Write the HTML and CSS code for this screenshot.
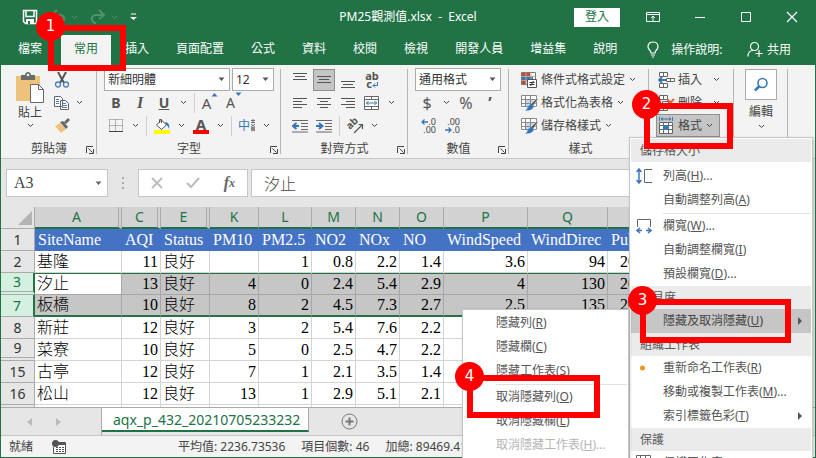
FILE: index.html
```html
<!DOCTYPE html>
<html lang="zh-Hant">

<head>
    <meta charset="UTF-8">
    <meta name="viewport" content="width=device-width, initial-scale=1.0">
    <title>PM25觀測值.xlsx - Excel</title>
    <link rel="stylesheet" href="styles.css">
</head>

<body>

    <!-- shared small glyphs -->
    <svg class="sprite" aria-hidden="true">
        <symbol id="chev" viewBox="0 0 7 5"><path d="M1 1l2.5 2.5L6 1" fill="none" stroke="currentColor"/></symbol>
        <symbol id="tri" viewBox="0 0 7 5"><path d="M0.5 0.5h6L3.5 4z" fill="currentColor"/></symbol>
        <symbol id="launch" viewBox="0 0 9 9"><path d="M1.5 8V1.5H8M3.5 3.5l4 4M8.5 4v4.5H4" fill="none" stroke="currentColor"/></symbol>
        <symbol id="brushgrid" viewBox="0 0 17 16">
            <path d="M1 1h15v12H1z" fill="#fff"/><path d="M5 5h8v8H5z" fill="#c7d7ea"/>
            <path d="M.5 .5h15v11h-15zM.5 4.5h15M.5 8.5h15M4.500 .5v11M9.500 .5v11" fill="none" stroke="#888"/>
            <path d="M16 3l1 1-5 7-2-2z" fill="#555" stroke="#f3f3f3" stroke-width=".6"/><path d="M10 9c2 0 3 2 2 4-2 3-5 2-8 3 3-2 3-6 6-7z" fill="#3877b7"/>
        </symbol>
    </svg>

    <div class="window">

        <header class="titlebar">
            <div class="quick">
                <button type="button" aria-label="儲存"><svg width="16" height="16" viewBox="0 0 16 16"><path d="M1.500 1.500h13v13h-11l-2-2zM4 1.500v6h8v-6" fill="none" stroke="#fff" stroke-width="1.500"/><path d="M4 10h8v5H4z" fill="#fff"/><path d="M6 12h2v3H6z" fill="#217346"/></svg></button>
                <button type="button" class="dim" aria-label="復原"><svg width="16" height="16" viewBox="0 0 16 16"><path d="M7 1L2 6l5 4M2 6h8c6 0 5 8 0 8" fill="none" stroke="currentColor" stroke-width="2"/></svg><svg class="chev"><use href="#chev"/></svg></button>
                <button type="button" class="dim" aria-label="重做"><svg width="16" height="16" viewBox="0 0 16 16"><path d="M9 1l5 5-5 4M14 6H6c-6 0-5 8 0 8" fill="none" stroke="currentColor" stroke-width="2"/></svg><svg class="chev"><use href="#chev"/></svg></button>
                <button type="button" aria-label="自訂快速存取工具列"><svg width="7" height="8" viewBox="0 0 7 8"><path d="M1 1h5" stroke="#fff"/><path d="M0 4h7L3.500 7z" fill="#fff"/></svg></button>
            </div>
            <h1>PM25觀測值.xlsx&nbsp; -&nbsp; Excel</h1>
            <div class="system">
                <button type="button" class="signin">登入</button>
                <button type="button" aria-label="功能區顯示選項"><svg width="14" height="12" viewBox="0 0 14 12"><path d="M.5 1.500h13v9H.5zM.5 3.500h13M7 10V5M5 7l2-2 2 2" fill="none" stroke="#fff"/></svg></button>
                <button type="button" aria-label="最小化"><svg width="12" height="12" viewBox="0 0 12 12"><path d="M1 6.500h10" stroke="#fff"/></svg></button>
                <button type="button" aria-label="最大化"><svg width="12" height="12" viewBox="0 0 12 12"><path d="M1.500 1.500h9v9h-9z" fill="none" stroke="#fff"/></svg></button>
                <button type="button" aria-label="關閉"><svg width="12" height="12" viewBox="0 0 12 12"><path d="M1 1l10 10M11 1L1 11" stroke="#fff" stroke-width="1.200"/></svg></button>
            </div>
        </header>

        <nav class="tabs">
            <a href="#" class="file">檔案</a>
            <a href="#" class="active">常用</a>
            <a href="#">插入</a>
            <a href="#">頁面配置</a>
            <a href="#">公式</a>
            <a href="#">資料</a>
            <a href="#">校閱</a>
            <a href="#">檢視</a>
            <a href="#">開發人員</a>
            <a href="#">增益集</a>
            <a href="#">說明</a>
            <div class="tabs-right">
                <button type="button"><svg width="12" height="17" viewBox="0 0 12 17"><path d="M4 12c0-3-3-3-3-6.500C1 3 3 1 6 1s5 2 5 4.500C11 9 8 9 8 12zM4 14h4M5 16h2" fill="none" stroke="#fff" stroke-width="1.200"/></svg><span class="tell">操作說明:</span></button>
                <button type="button"><svg width="16" height="17" viewBox="0 0 16 17"><circle cx="7.500" cy="5.500" r="4" fill="none" stroke="#fff" stroke-width="1.200"/><path d="M1 15.500c0-4 2-6 5-6M12 9v7M8.500 12.500h7" fill="none" stroke="#fff" stroke-width="1.200"/></svg><span>共用</span></button>
            </div>
        </nav>

        <div class="ribbon">

            <section class="group clipboard">
                <div class="side">
                    <button type="button" class="big">
                        <svg width="28" height="31" viewBox="0 0 28 31"><path d="M0 4h24v25H0z" fill="#eec27c"/><path d="M5 3h4c0-4 6-4 6 0h4v5H5z" fill="#6a6a6a"/><circle cx="12" cy="3" r="1.300" fill="#f3f3f3"/><path d="M14.500 12.500h8l5 5v13h-13z" fill="#fff" stroke="#666"/><path d="M22.500 12.500v5h5" fill="none" stroke="#666"/></svg>
                        <span>貼上</span>
                        <svg class="chev"><use href="#chev"/></svg>
                    </button>
                    <div class="rows">
                        <div class="row"><button type="button" class="ic" aria-label="剪下"><svg width="16" height="16" viewBox="0 0 16 16"><path d="M4 0l6 11M12 0L6 11" stroke="#555" stroke-width="2"/><circle cx="4" cy="12.500" r="2.500" fill="none" stroke="#4a7ebb" stroke-width="1.300"/><circle cx="12" cy="12.500" r="2.500" fill="none" stroke="#4a7ebb" stroke-width="1.300"/></svg></button></div>
                        <div class="row"><button type="button" class="ic" aria-label="複製"><svg width="16" height="16" viewBox="0 0 16 16"><path d="M.5 1.500h6l2 2v8h-8zM6.500 5.500h5l3 3v6h-8z" fill="#fff" stroke="#666"/><path d="M2 4.500h3M2 6.500h3M2 8.500h3M8 8.500h4M8 10.500h5M8 12.500h5" stroke="#4a7ebb"/></svg></button><svg class="chev"><use href="#chev"/></svg></div>
                        <div class="row"><button type="button" class="ic" aria-label="複製格式"><svg width="16" height="16" viewBox="0 0 16 16"><path d="M1 8l5-3 6 6-5 4z" fill="#eec27c"/><path d="M6 4l3-1 5 6-2 2zM10 4l4-4 2 2-4 4z" fill="#666"/></svg></button></div>
                    </div>
                </div>
                <h2>剪貼簿<button type="button" class="launch" aria-label="剪貼簿設定"><svg><use href="#launch"/></svg></button></h2>
            </section>

            <section class="group font">
                <div class="row">
                    <label class="combo fontname"><select aria-label="字型"><option>新細明體</option></select><svg class="chev"><use href="#tri"/></svg></label>
                    <label class="combo fontsize"><select aria-label="字型大小"><option>12</option></select><svg class="chev"><use href="#tri"/></svg></label>
                </div>
                <div class="row">
                    <button type="button" class="btn letter"><b>B</b></button>
                    <button type="button" class="btn letter"><i>I</i></button>
                    <button type="button" class="btn letter"><u>U</u></button>
                    <svg class="chev"><use href="#chev"/></svg>
                    <span class="bar"></span>
                    <button type="button" class="btn grow">A<svg class="chev up"><use href="#tri"/></svg></button>
                    <button type="button" class="btn shrink">A<svg class="chev"><use href="#tri"/></svg></button>
                </div>
                <div class="row">
                    <button type="button" class="btn" aria-label="框線"><svg width="14" height="14" viewBox="0 0 14 14"><path d="M.5 .5h13M.5 6.500h13M.5 .5v12M6.500 .5v12M13.500 .5v12" stroke="#777" stroke-dasharray="1 1" fill="none"/><path d="M0 12.500h14" stroke="#444"/></svg></button>
                    <svg class="chev"><use href="#chev"/></svg>
                    <span class="bar"></span>
                    <button type="button" class="btn" aria-label="填滿色彩"><svg width="16" height="16" viewBox="0 0 16 16"><path d="M2.500 7l5-5 5 5-5 4.500z" fill="#fff" stroke="#555"/><path d="M5.500 5V1.500h2V5" fill="none" stroke="#555"/><path d="M11 4c4 0 5 4 4 7-1-3-1-3-3-4z" fill="#3877b7"/><path d="M0 12h16v4H0z" fill="#ff0"/></svg></button>
                    <svg class="chev"><use href="#chev"/></svg>
                    <button type="button" class="btn" aria-label="字型色彩"><span class="fontcolor">A</span></button>
                    <svg class="chev"><use href="#chev"/></svg>
                    <span class="bar"></span>
                    <button type="button" class="btn phonetic">中<svg width="6" height="13" viewBox="0 0 6 13"><path d="M1 1.500h4M1 3.500h4M3 0v4M1 5l4 3-4 2 4 2M5 5L1 8l4 2-4 2" fill="none" stroke="#555" stroke-width=".8"/></svg></button>
                    <svg class="chev"><use href="#chev"/></svg>
                </div>
                <h2>字型<button type="button" class="launch" aria-label="字型設定"><svg><use href="#launch"/></svg></button></h2>
            </section>

            <section class="group align">
                <div class="row">
                    <button type="button" class="btn" aria-label="靠上對齊"><svg width="14" height="16" viewBox="0 0 14 16"><path d="M0 1.500h14M2 4.500h10M0 7.500h14" stroke="#555"/></svg></button>
                    <button type="button" class="btn on" aria-label="置中對齊"><svg width="14" height="16" viewBox="0 0 14 16"><path d="M0 4.500h14M2 7.500h10M0 10.500h14" stroke="#555"/></svg></button>
                    <button type="button" class="btn" aria-label="靠下對齊"><svg width="14" height="16" viewBox="0 0 14 16"><path d="M0 9.500h14M2 12.500h10M0 15.500h14" stroke="#555"/></svg></button>
                    <button type="button" class="btn wrap"><span>ab</span><span>c<svg width="6" height="6" viewBox="0 0 6 6"><path d="M5.500 0v3.500H1M3 1.500l-2 2 2 2" fill="none" stroke="#3877b7"/></svg></span></button>
                </div>
                <div class="row">
                    <button type="button" class="btn" aria-label="靠左對齊"><svg width="14" height="12" viewBox="0 0 14 12"><path d="M0 1.500h14M0 4.500h9M0 7.500h14M0 10.500h9" stroke="#555"/></svg></button>
                    <button type="button" class="btn" aria-label="置中"><svg width="14" height="12" viewBox="0 0 14 12"><path d="M0 1.500h14M3 4.500h8M0 7.500h14M3 10.500h8" stroke="#555"/></svg></button>
                    <button type="button" class="btn" aria-label="靠右對齊"><svg width="14" height="12" viewBox="0 0 14 12"><path d="M0 1.500h14M5 4.500h9M0 7.500h14M5 10.500h9" stroke="#555"/></svg></button>
                    <button type="button" class="btn" aria-label="跨欄置中"><svg width="16" height="16" viewBox="0 0 16 16"><path d="M.5 1.500h14v13H.5zM.5 4.500h14M.5 11.500h14M7.500 1.500v3M7.500 11.500v3" fill="#fff" stroke="#666"/><path d="M2 8h11M4.500 6l-2 2 2 2M10.500 6l2 2-2 2" fill="none" stroke="#3877b7"/></svg></button>
                    <svg class="chev"><use href="#chev"/></svg>
                </div>
                <div class="row">
                    <button type="button" class="btn" aria-label="減少縮排"><svg width="16" height="14" viewBox="0 0 16 14"><path d="M0 1.500h16M9 4.500h7M9 7.500h7M9 10.500h7M0 13h16" stroke="#666"/><path d="M7 7H2M4.500 4L1 7l3.500 3" fill="none" stroke="#3877b7" stroke-width="2"/></svg></button>
                    <button type="button" class="btn" aria-label="增加縮排"><svg width="16" height="14" viewBox="0 0 16 14"><path d="M0 1.500h16M9 4.500h7M9 7.500h7M9 10.500h7M0 13h16" stroke="#666"/><path d="M0 7h5M3 4l3.500 3L3 10" fill="none" stroke="#3877b7" stroke-width="2"/></svg></button>
                    <span class="bar"></span>
                    <button type="button" class="btn" aria-label="方向"><svg width="18" height="18" viewBox="0 0 18 18"><text x="4" y="13" transform="rotate(-45 4 13)" class="abtext">ab</text><path d="M8 16l8-8M12.500 7.500h4V12" fill="none" stroke="#555" stroke-width="1.200"/></svg></button>
                    <svg class="chev"><use href="#chev"/></svg>
                </div>
                <h2>對齊方式<button type="button" class="launch" aria-label="對齊設定"><svg><use href="#launch"/></svg></button></h2>
            </section>

            <section class="group number">
                <div class="row">
                    <label class="combo numfmt"><select aria-label="數值格式"><option>通用格式</option></select><svg class="chev"><use href="#tri"/></svg></label>
                </div>
                <div class="row">
                    <button type="button" class="btn sign">$</button>
                    <svg class="chev"><use href="#chev"/></svg>
                    <button type="button" class="btn sign">%</button>
                    <button type="button" class="btn sign comma">’</button>
                </div>
                <div class="row">
                    <button type="button" class="btn dec"><span><svg width="7" height="6" viewBox="0 0 7 6"><path d="M7 3H1M3.500 .5L1 3l2.500 2.500" fill="none" stroke="#3877b7" stroke-width="1.300"/></svg>.0</span><span>.00</span></button>
                    <button type="button" class="btn dec"><span>.00</span><span><svg width="7" height="6" viewBox="0 0 7 6"><path d="M0 3h6M3.500 .5L6 3 3.500 5.500" fill="none" stroke="#3877b7" stroke-width="1.300"/></svg>.0</span></button>
                </div>
                <h2>數值<button type="button" class="launch" aria-label="數值設定"><svg><use href="#launch"/></svg></button></h2>
            </section>

            <section class="group styles">
                <div class="row"><button type="button" class="cmd"><svg width="17" height="16" viewBox="0 0 17 16"><path d="M.5 .5h14v12H.5z" fill="#fff" stroke="#777"/><path d="M1 1h8v3H1zM1 9h4v3H1z" fill="#d24726"/><path d="M1 5h11v3H1z" fill="#3877b7"/><path d="M.5 4.500h14M.5 8.500h14M5 .5v12M10 .5v12" stroke="#aaa"/><path d="M6.500 7.500h9v8h-9z" fill="#fff" stroke="#555"/><path d="M8.500 10.500h5M8.500 12.500h5M12.500 9l-3 5" stroke="#333"/></svg>條件式格式設定<svg class="chev"><use href="#chev"/></svg></button></div>
                <div class="row"><button type="button" class="cmd"><svg width="17" height="16"><use href="#brushgrid"/></svg>格式化為表格<svg class="chev"><use href="#chev"/></svg></button></div>
                <div class="row"><button type="button" class="cmd"><svg width="17" height="16"><use href="#brushgrid"/></svg>儲存格樣式<svg class="chev"><use href="#chev"/></svg></button></div>
                <h2>樣式</h2>
            </section>

            <section class="group cells">
                <div class="row"><button type="button" class="cmd wide"><svg width="17" height="16" viewBox="0 0 17 16"><path d="M1.500 .5h8v4h-8zM5.500 .5v4M1.500 11.500h8v4h-8zM5.500 11.500v4M8.500 6.500h8v3h-8zM12.500 6.500v3" fill="#fff" stroke="#666"/><path d="M8 8H2M4 5L1 8l3 3" fill="none" stroke="#3877b7" stroke-width="1.800"/></svg>插入<svg class="chev"><use href="#chev"/></svg></button></div>
                <div class="row"><button type="button" class="cmd wide"><svg width="17" height="16" viewBox="0 0 17 16"><path d="M1.500 .5h8v4h-8zM5.500 .5v4M4.500 6.500h6v3h-6zM1.500 11.500h8v4h-8zM5.500 11.500v4" fill="#fff" stroke="#666"/><path d="M9 4l7 7M16 4l-7 7" stroke="#d8643f" stroke-width="2"/></svg>刪除<svg class="chev"><use href="#chev"/></svg></button></div>
                <div class="row"><button type="button" class="cmd on"><svg width="17" height="17" viewBox="0 0 17 17"><path d="M1.500 0v4M14.500 0v4M3 2h10M5 .5L3 2l2 1.500M11 .5L13 2l-2 1.500" fill="none" stroke="#3877b7"/><path d="M1.500 5.500h13v11h-13zM1.500 8.500h13M1.500 12.500h13M5.500 5.500v11M10.500 5.500v11" fill="#fff" stroke="#666"/><path d="M5 8h6v5H5z" fill="#3877b7"/></svg>格式<svg class="chev"><use href="#chev"/></svg></button></div>
            </section>

            <section class="group edit">
                <button type="button" class="big">
                    <span class="find"><svg width="16" height="16" viewBox="0 0 16 16"><circle cx="9.500" cy="6" r="4.500" fill="none" stroke="#3877b7" stroke-width="1.600"/><path d="M6.500 9L2 13.500" stroke="#3877b7" stroke-width="2.500"/></svg></span>
                    <span>編輯</span>
                    <svg class="chev"><use href="#chev"/></svg>
                </button>
            </section>
        </div>

        <div class="formulabar">
            <label class="namebox"><input type="text" value="A3" aria-label="名稱方塊"><svg class="chev"><use href="#tri"/></svg></label>
            <span class="grip"></span>
            <div class="fx">
                <button type="button" aria-label="取消"><svg width="12" height="12" viewBox="0 0 12 12"><path d="M1 1l10 10M11 1L1 11" stroke="#bbb" stroke-width="1.800"/></svg></button>
                <button type="button" aria-label="輸入"><svg width="14" height="12" viewBox="0 0 14 12"><path d="M1 6l4 4 8-9" fill="none" stroke="#bbb" stroke-width="2"/></svg></button>
                <button type="button" class="fxbtn"><i>f</i><sub>x</sub></button>
            </div>
            <input type="text" class="formula" value="汐止" aria-label="資料編輯列">
        </div>

        <div class="sheet">
            <table>
                <colgroup>
                    <col class="c-head"><col class="c-a"><col class="c-c"><col class="c-e"><col class="c-e"><col class="c-l"><col class="c-n"><col class="c-n"><col class="c-n"><col class="c-p"><col class="c-q"><col>
                </colgroup>
                <thead>
                    <tr><th class="corner"><svg width="14" height="14" viewBox="0 0 14 14"><path d="M14 0v14H0z" fill="#b4b4b4"/></svg></th><th class="gap">A</th><th class="gap">C</th><th class="gap">E</th><th>K</th><th>L</th><th>M</th><th>N</th><th>O</th><th>P</th><th>Q</th><th>R</th></tr>
                </thead>
                <tbody>
                    <tr class="titles"><th>1</th><td>SiteName</td><td>AQI</td><td>Status</td><td>PM10</td><td>PM2.5</td><td>NO2</td><td>NOx</td><td>NO</td><td>WindSpeed</td><td>WindDirec</td><td>PublishTime</td></tr>
                    <tr><th>2</th><td class="t">基隆</td><td>11</td><td class="t">良好</td><td></td><td>1</td><td>0.8</td><td>2.2</td><td>1.4</td><td>3.6</td><td>94</td><td class="date">2021/7/5</td></tr>
                    <tr class="sel first"><th class="gap">3</th><td class="t cur">汐止</td><td>13</td><td class="t">良好</td><td>4</td><td>0</td><td>2.4</td><td>5.4</td><td>2.9</td><td>4</td><td>130</td><td class="date">2021/7/5</td></tr>
                    <tr class="sel last"><th>7</th><td class="t">板橋</td><td>10</td><td class="t">良好</td><td>8</td><td>2</td><td>4.5</td><td>7.3</td><td>2.7</td><td>2.5</td><td>135</td><td class="date">2021/7/5</td></tr>
                    <tr><th>8</th><td class="t">新莊</td><td>12</td><td class="t">良好</td><td>3</td><td>2</td><td>5.4</td><td>7.6</td><td>2.2</td><td></td><td></td><td></td></tr>
                    <tr><th class="gap">9</th><td class="t">菜寮</td><td>10</td><td class="t">良好</td><td>5</td><td>0</td><td>2.5</td><td>4.7</td><td>2.2</td><td></td><td></td><td></td></tr>
                    <tr><th>15</th><td class="t">古亭</td><td>12</td><td class="t">良好</td><td>7</td><td>1</td><td>2.1</td><td>3.5</td><td>1.4</td><td></td><td></td><td></td></tr>
                    <tr><th>16</th><td class="t">松山</td><td>12</td><td class="t">良好</td><td>13</td><td>1</td><td>2.9</td><td>5.1</td><td>2.1</td><td></td><td></td><td></td></tr>
                    <tr><th></th><td></td><td></td><td></td><td></td><td></td><td></td><td></td><td></td><td></td><td></td><td></td></tr>
                </tbody>
            </table>
        </div>

        <div class="sheettabs">
            <div class="nav">
                <button type="button" aria-label="上一張"><svg width="5" height="8" viewBox="0 0 5 8"><path d="M5 0v8L0 4z" fill="#bbb"/></svg></button>
                <button type="button" aria-label="下一張"><svg width="5" height="8" viewBox="0 0 5 8"><path d="M0 0v8l5-4z" fill="#bbb"/></svg></button>
            </div>
            <a href="#" class="sheettab">aqx_p_432_20210705233232</a>
            <button type="button" class="add" aria-label="新工作表"><svg width="17" height="17" viewBox="0 0 17 17"><circle cx="8.500" cy="8.500" r="7.500" fill="none" stroke="#777"/><path d="M8.500 4.500v8M4.500 8.500h8" stroke="#777" stroke-width="2"/></svg></button>
        </div>

        <footer class="status">
            <span class="ready">就緒</span>
            <svg width="14" height="14" viewBox="0 0 14 14"><path d="M6 2.500h7.500v11h-12V7" fill="#fff" stroke="#555"/><path d="M7 3h6v2H7z" fill="#555"/><circle cx="3.500" cy="3.500" r="3.500" fill="#555"/><path d="M4 7.500h2M7 7.500h2M10 7.500h2M4 9.500h2M7 9.500h2M10 9.500h2M4 11.500h2M7 11.500h2M10 11.500h2" stroke="#555"/></svg>
            <div class="stats">
                <span>平均值: 2236.73536</span>
                <span>項目個數: 46</span>
                <span>加總: 89469.41437</span>
            </div>
        </footer>
    </div>

    <!-- format menu -->
    <div class="menu format-menu">
        <h3>儲存格大小</h3>
        <ul class="spaced">
            <li><button type="button"><svg width="16" height="16" viewBox="0 0 16 16"><path d="M3 1v14M.5 4L3 1l2.500 3M.5 12L3 15l2.500-3" fill="none" stroke="#3877b7" stroke-width="1.500"/><path d="M16 1.500H8.500v13H16" fill="none" stroke="#666"/></svg><span>列高(<u>H</u>)...</span></button></li>
            <li><button type="button"><span>自動調整列高(<u>A</u>)</span></button></li>
            <li class="line"></li>
            <li><button type="button"><svg width="16" height="16" viewBox="0 0 16 16"><path d="M1.500 9V1.500h13V9" fill="none" stroke="#666"/><path d="M1 12.500h5M10 12.500h5M4 10l-3 2.500L4 15M12 10l3 2.500-3 2.500" fill="none" stroke="#3877b7" stroke-width="1.500"/></svg><span>欄寬(<u>W</u>)...</span></button></li>
            <li><button type="button"><span>自動調整欄寬(<u>I</u>)</span></button></li>
            <li><button type="button"><span>預設欄寬(<u>D</u>)...</span></button></li>
        </ul>
        <h3>可見度</h3>
        <ul>
            <li><button type="button" class="hover"><span>隱藏及取消隱藏(<u>U</u>)</span><svg class="more" width="5" height="8" viewBox="0 0 5 8"><path d="M0 0v8l4-4z" fill="#555"/></svg></button></li>
        </ul>
        <h3>組織工作表</h3>
        <ul>
            <li><button type="button"><svg width="16" height="16" viewBox="0 0 16 16"><circle cx="6.500" cy="8" r="2.500" fill="#f7941d"/></svg><span>重新命名工作表(<u>R</u>)</span></button></li>
            <li><button type="button"><span>移動或複製工作表(<u>M</u>)...</span></button></li>
            <li><button type="button"><span>索引標籤色彩(<u>T</u>)</span><svg class="more" width="5" height="8" viewBox="0 0 5 8"><path d="M0 0v8l4-4z" fill="#555"/></svg></button></li>
        </ul>
        <h3>保護</h3>
        <ul>
            <li><button type="button"><svg width="16" height="16" viewBox="0 0 16 16"><path d="M.5 .5h14v14H.5zM.5 4.500h14M.5 8.500h14M4.500 .5v14M9.500 .5v14" fill="none" stroke="#666"/></svg><span>保護工作表(<u>P</u>)...</span></button></li>
        </ul>
    </div>

    <!-- hide / unhide submenu -->
    <div class="menu hide-menu">
        <ul>
            <li><button type="button"><span>隱藏列(<u>R</u>)</span></button></li>
            <li><button type="button"><span>隱藏欄(<u>C</u>)</span></button></li>
            <li><button type="button"><span>隱藏工作表(<u>S</u>)</span></button></li>
            <li class="line"></li>
            <li><button type="button"><span>取消隱藏列(<u>O</u>)</span></button></li>
            <li><button type="button"><span>取消隱藏欄(<u>L</u>)</span></button></li>
            <li><button type="button" disabled><span>取消隱藏工作表(<u>H</u>)...</span></button></li>
        </ul>
    </div>

    <!-- numbered steps -->
    <div class="step step1"><span>1</span></div>
    <div class="step step2"><span>2</span></div>
    <div class="step step3"><span>3</span></div>
    <div class="step step4"><span>4</span></div>

</body>

</html>
```

FILE: styles.css
```css
* {
    box-sizing: border-box;
}

body {
    margin: 0;
    height: 100vh;
    position: relative;
    overflow: hidden;
    font-family: "Noto Sans", "Noto Sans CJK TC", sans-serif;
    font-size: 12px;
    line-height: 16px;
    color: #444;
}

button,
input,
select {
    font: inherit;
    color: inherit;
    background: none;
    border: none;
    padding: 0;
    margin: 0;
    outline: none;
}

button {
    display: flex;
    align-items: center;
    justify-content: center;
    white-space: nowrap;
}

a {
    color: inherit;
    text-decoration: none;
}

h1,
h2,
h3,
ul {
    margin: 0;
    padding: 0;
    font-size: 12px;
    font-weight: normal;
    list-style: none;
}

svg {
    flex: none;
}

.sprite {
    display: none;
}

.chev {
    width: 7px;
    height: 5px;
}

.window {
    height: 100vh;
    display: flex;
    flex-direction: column;
    background: #e6e6e6;
    border: 1px solid #217346;
    border-top: none;
}

/* title bar */
.titlebar {
    display: grid;
    grid-template-columns: 1fr auto 1fr;
    align-items: center;
    flex: none;
    height: 34px;
    background: #217346;
    color: #fff;
}

.quick {
    display: flex;
    align-items: center;
    padding-left: 21px;
    gap: 12px;
}

.quick button {
    gap: 5px;
}

.dim {
    color: #4f9170;
}

.system {
    display: flex;
    align-items: center;
    justify-content: flex-end;
    padding-right: 17px;
    gap: 34px;
}

.signin {
    background: #fff;
    color: #217346;
    width: 46px;
    height: 19px;
    margin-right: -8px;
}

/* ribbon tabs */
.tabs {
    display: flex;
    flex: none;
    height: 31px;
    background: #217346;
    color: #fff;
    gap: 1px;
}

.tabs a {
    padding: 7px 13px;
    white-space: nowrap;
}

.tabs .file {
    padding: 7px 18px 7px 17px;
}

.tabs .active {
    margin-top: 1px;
    padding: 6px 13px;
    background: #f3f3f3;
    color: #217346;
}

.tabs-right {
    display: flex;
    flex: 1;
    justify-content: space-between;
    padding: 0 24px 0 16px;
}

.tabs-right button {
    gap: 4px;
}

.tell {
    padding-left: 8px;
}

/* ribbon */
.ribbon {
    display: flex;
    flex: none;
    height: 94px;
    background: #f3f3f3;
    border-bottom: 1px solid #c8c8c8;
}

.group {
    display: flex;
    flex-direction: column;
    flex: none;
    position: relative;
    padding: 3px 7px 0;
}

/* divider line on the right of each group */
.group:after {
    content: "";
    position: absolute;
    right: 0;
    top: 4px;
    bottom: 4px;
    width: 1px;
    background: #b5b5b5;
}

.group h2 {
    display: flex;
    justify-content: center;
    position: relative;
    padding-top: 4px;
}

.launch {
    position: absolute;
    right: -4px;
    top: 8px;
}

.launch svg {
    width: 9px;
    height: 9px;
}

.clipboard { width: 96px; }
.font { width: 184px; }
.align { width: 127px; }
.number { width: 101px; }
.styles { width: 140px; padding-left: 10px; }
.cells { width: 85px; }
.edit { width: 54px; }

.row {
    display: flex;
    align-items: center;
    height: 23px;
}

.row > .chev {
    margin: 0 4px;
}

.side {
    display: flex;
}

.big {
    flex-direction: column;
    justify-content: flex-start;
    width: 44px;
    height: 69px;
    padding-top: 4px;
    gap: 2px;
}

.edit .big {
    width: 40px;
    padding-top: 1px;
    gap: 4px;
}

.find {
    display: flex;
    align-items: center;
    justify-content: center;
    width: 32px;
    height: 31px;
    background: #fff;
    border: 1px solid #ababab;
}

.ic {
    width: 20px;
}

.btn {
    width: 24px;
    height: 22px;
}

.btn.on {
    width: 22px;
    margin: 0 1px;
    background: #c5c5c5;
    border: 1px solid #8f8f8f;
}

.letter,
.grow,
.shrink {
    font-size: 14px;
    color: #555;
}

.grow {
    font-size: 15px;
}

.letter i {
    font-family: "Liberation Serif", serif;
    font-size: 16px;
    font-weight: bold;
}

.letter u {
    font-weight: bold;
}

.grow svg,
.shrink svg {
    align-self: flex-start;
    color: #3877b7;
}

.up {
    transform: rotate(180deg);
}

.fontcolor {
    width: 16px;
    height: 17px;
    font-size: 15px;
    font-weight: bold;
    line-height: 14px;
    color: #555;
    border-bottom: 4px solid #f00;
}

.phonetic {
    color: #3877b7;
}

.bar {
    width: 1px;
    height: 20px;
    margin: 0 3px;
    background: #d0d0d0;
}

.combo {
    display: flex;
    align-items: center;
    height: 23px;
    background: #fff;
    border: 1px solid #ababab;
    padding: 0 4px 0 3px;
    color: #555;
}

.combo select {
    appearance: none;
    flex: 1;
    min-width: 0;
    color: #333;
}

.fontname { width: 126px; margin-right: 2px; }
.fontsize { width: 42px; }
.numfmt { width: 86px; }

.wrap,
.dec {
    flex-direction: column;
    line-height: 8px;
}

.wrap {
    font-weight: bold;
    font-size: 11px;
    color: #555;
}

.dec {
    font-size: 9px;
    align-items: flex-end;
    padding-right: 3px;
}

.abtext {
    font-size: 10px;
    font-weight: bold;
    fill: #555;
}

.sign {
    font-size: 16px;
    color: #555;
}

.comma {
    font-weight: bold;
}

.cmd {
    height: 23px;
    padding: 0 4px 0 2px;
    gap: 3px;
    color: #444;
}

.cmd .chev {
    margin-left: 1px;
}

.wide .chev {
    margin-left: 8px;
}

.cmd.on {
    background: #c5c5c5;
    border: 1px solid #8f8f8f;
    padding: 0 6px 0 1px;
}

/* formula bar */
.formulabar {
    display: flex;
    align-items: center;
    flex: none;
    height: 48px;
    padding: 0 2px 0 5px;
    font-family: "Liberation Serif", "Noto Sans CJK TC", serif;
    font-size: 16px;
}

.namebox,
.fx,
.formula {
    display: flex;
    align-items: center;
    height: 28px;
    background: #fff;
    border: 1px solid #c6c6c6;
}

.namebox {
    width: 102px;
    padding: 0 5px 0 7px;
    color: #666;
}

.namebox input {
    flex: 1;
    min-width: 0;
    color: #444;
}

.grip {
    width: 2px;
    height: 12px;
    margin: 0 14px;
    background: repeating-linear-gradient(#aaa 0 2px, transparent 2px 5px);
}

.fx {
    width: 110px;
    justify-content: space-between;
    padding: 0 12px;
    margin-right: 3px;
}

.fxbtn {
    font-weight: bold;
    color: #666;
}

.fxbtn sub {
    font-size: 12px;
    font-style: italic;
}

.formula {
    flex: 1;
    min-width: 0;
    padding: 0 12px;
    font-weight: 300;
}

/* sheet */
.sheet {
    flex: 1;
    min-height: 0;
    margin-right: 4px;
    overflow: hidden;
    background: #fff;
}

table {
    width: 100%;
    table-layout: fixed;
    border-collapse: separate;
    border-spacing: 0;
}

.c-head { width: 34px; }
.c-a { width: 87px; }
.c-c { width: 39px; }
.c-e { width: 49px; }
.c-l { width: 53px; }
.c-n { width: 44px; }
.c-p { width: 84px; }
.c-q { width: 80px; }

th,
td {
    height: 22px;
    padding: 0 2px;
    overflow: hidden;
    white-space: nowrap;
    border-right: 1px solid #d4d4d4;
    border-bottom: 1px solid #d4d4d4;
}

th {
    font-size: 14px;
    line-height: 18px;
    font-weight: normal;
    background: #e6e6e6;
    color: #333;
    border-color: #ababab;
}

thead th {
    background: #d2d2d2;
    color: #217346;
    border-bottom: 2px solid #217346;
}

thead .gap {
    border-right: 4px double #ababab;
}

tbody .gap {
    border-bottom: 4px double #ababab;
}

thead .corner {
    background: #e6e6e6;
    text-align: right;
    border-bottom: 1px solid #ababab;
}

.corner svg {
    display: block;
    margin-left: auto;
}

td {
    font-family: "Liberation Serif", "Noto Sans CJK TC", serif;
    font-size: 16px;
    line-height: 20px;
    color: #000;
    text-align: right;
}

.t,
.titles td {
    text-align: left;
}

.t {
    font-weight: 300;
}

.titles td {
    padding-left: 3px;
    background: #4472c4;
    border-color: #4472c4;
    color: #fff;
}

td.date {
    text-align: left;
    padding-left: 12px;
}

.sel td {
    background: #c6c6c6;
    border-color: #a6a6a6;
}

.sel th {
    background: #d3f0e0;
    color: #217346;
    border-right: 2px solid #217346;
}

.first td {
    box-shadow: inset 0 1px #217346;
}

.sel td.cur {
    background: #fff;
}

.last td {
    border-bottom: 2px solid #217346;
}

/* sheet tabs */
.sheettabs {
    display: flex;
    flex: none;
    height: 28px;
    border-top: 1px solid #ababab;
}

.nav {
    display: flex;
    justify-content: center;
    gap: 24px;
    width: 101px;
    padding-right: 14px;
    border-right: 1px solid #ababab;
}

.sheettab {
    height: 24px;
    padding: 2px 8px 2px 11px;
    font-size: 14px;
    line-height: 20px;
    color: #217346;
    background: #fff;
    border-bottom: 2px solid #217346;
    border-right: 1px solid #ababab;
}

.add {
    margin-left: 32px;
}

/* status bar */
.status {
    display: flex;
    align-items: center;
    flex: none;
    height: 22px;
    padding-left: 8px;
    gap: 19px;
    background: #f3f3f3;
    border-top: 1px solid #c6c6c6;
    white-space: nowrap;
}

.stats {
    display: flex;
    gap: 16px;
    padding-left: 93px;
}

/* menus */
.menu {
    position: absolute;
    background: #fff;
    border: 1px solid #c6c6c6;
    box-shadow: 1px 1px 3px rgba(0, 0, 0, 0.2);
    padding: 1px;
    color: #555;
}

.format-menu {
    top: 137px;
    right: 3px;
    width: 184px;
}

.hide-menu {
    top: 309px;
    right: 187px;
    width: 167px;
}

.menu h3 {
    height: 23px;
    padding-left: 9px;
    line-height: 24px;
    background: #ebebeb;
}

.spaced {
    padding-top: 2px;
}

.menu li button {
    justify-content: flex-start;
    width: 100%;
    height: 24px;
    padding-left: 5px;
}

.menu li span {
    margin-left: 27px;
}

.menu li svg + span {
    margin-left: 11px;
}

.menu .more {
    margin-left: auto;
    margin-right: 8px;
}

.line {
    height: 2px;
    margin-left: 32px;
    border-bottom: 1px solid #e1e1e1;
}

.menu .hover {
    background: #c6c6c6;
    color: #444;
}

.menu button:disabled {
    color: #b5b5b5;
}

/* numbered steps */
.step {
    position: absolute;
    border: 6px solid #f00;
    pointer-events: none;
}

.step span {
    position: absolute;
    left: -18px;
    top: -19px;
    width: 29px;
    height: 29px;
    border-radius: 50%;
    background: #f00;
    color: #fff;
    font: 15px/29px "DejaVu Sans", sans-serif;
    text-align: center;
}

.step1 { left: 48px; top: 25px; width: 78px; height: 46px; }
.step2 { left: 644px; top: 103px; width: 89px; height: 46px; }
.step3 { left: 640px; top: 299px; width: 151px; height: 44px; }
.step4 { left: 467px; top: 375px; width: 133px; height: 43px; }
```
